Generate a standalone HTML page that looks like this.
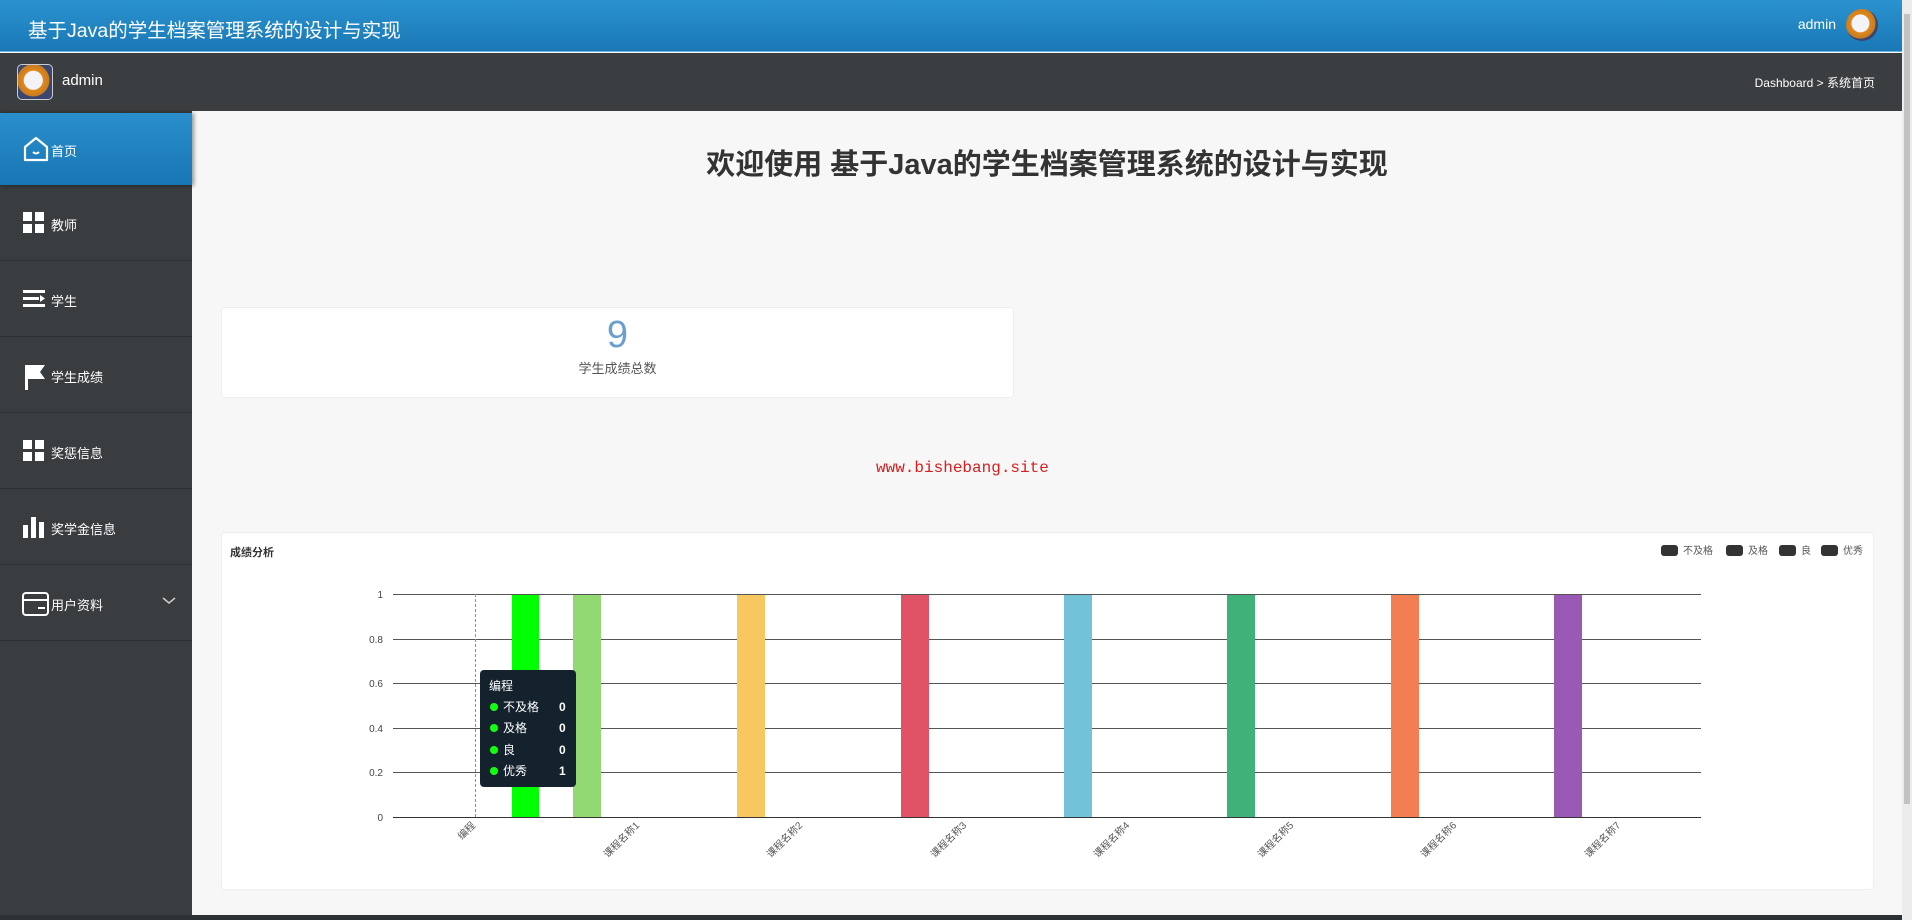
<!DOCTYPE html>
<html><head><meta charset="utf-8"><style>
*{margin:0;padding:0;box-sizing:border-box}
body{width:1912px;height:920px;overflow:hidden;background:#f7f7f7;font-family:"Liberation Sans","Noto Sans CJK SC",sans-serif;position:relative}
.top{position:absolute;left:0;top:0;width:1902px;height:52px;background:linear-gradient(#2a93cf,#1a78b6);border-bottom:1px solid #6fb8e6}
.top .t{position:absolute;left:28px;top:14px;color:#fff;font-size:19.5px}
.top .u{position:absolute;right:66px;top:16px;color:#fff;font-size:14px}
.av{position:absolute;border-radius:50%;background:radial-gradient(circle at 45% 45%,#f4f4f8 35%,#e08a1c 37%,#c77a20 60%,#3a4670 62%)}
.bar2{position:absolute;left:0;top:53px;width:1902px;height:58px;background:#3b3e40}
.bar2 .n{position:absolute;left:62px;top:19px;color:#fff;font-size:15px}
.bar2 .bc{position:absolute;right:27px;top:21px;color:#fff;font-size:12px}
.side{position:absolute;left:0;top:111px;width:192px;height:809px;background:#3a3d3f}
.it{position:absolute;left:0;width:192px;height:75px;border-bottom:1px solid #2e3133;color:#fff;font-size:13px}
.it span{position:absolute;left:51px;top:29px}
.it svg{position:absolute;left:22px;top:25px}
.home{background:linear-gradient(#2a8fcc,#1876b4);box-shadow:2px 0 4px rgba(0,0,0,.4)}
h1{position:absolute;left:192px;width:1710px;top:141px;text-align:center;font-size:29px;color:#333;font-weight:bold}
.card{position:absolute;background:#fff;border:1px solid #eee;border-radius:4px}
.scroll{position:absolute;right:0;top:0;width:10px;height:920px;background:#ececec}
.scroll i{position:absolute;left:2px;top:14px;width:6px;height:790px;background:#c2c2c2}
</style></head><body>
<div class="top"><div class="t">基于Java的学生档案管理系统的设计与实现</div><div class="u">admin</div>
<div class="av" style="left:1846px;top:9px;width:32px;height:32px"></div></div>
<div class="bar2"><div class="av" style="left:17px;top:11px;width:36px;height:36px;border-radius:5px;border:1px solid #ccc"></div><div class="n">admin</div><div class="bc">Dashboard &gt; 系统首页</div></div>
<div class="side">
<div class="it home" style="top:2px;height:73px"><svg width="28" height="28" viewBox="0 0 28 28" style="top:22px"><path d="M3 12L14 3L25 12V25H3Z" fill="none" stroke="#fff" stroke-width="2.2" stroke-linejoin="round"/><path d="M11 17Q14 20 17 17" fill="none" stroke="#fff" stroke-width="2"/></svg><span style="top:28px">首页</span></div>
<div class="it" style="top:75px"><svg width="24" height="24"><rect x="1" y="1" width="9" height="9" fill="#fff"/><rect x="13" y="1" width="9" height="9" fill="#fff"/><rect x="1" y="13" width="9" height="9" fill="#fff"/><rect x="13" y="13" width="9" height="9" fill="#fff"/></svg><span>教师</span></div>
<div class="it" style="top:151px"><svg width="24" height="24"><rect x="1" y="3" width="22" height="3" fill="#fff"/><rect x="1" y="10" width="16" height="3" fill="#fff"/><path d="M18 8L23 11.5L18 15Z" fill="#fff"/><rect x="1" y="17" width="22" height="3" fill="#fff"/></svg><span>学生</span></div>
<div class="it" style="top:227px"><svg width="24" height="28"><rect x="3" y="2" width="3" height="25" fill="#fff"/><path d="M6 2H23L18 9L23 16H6Z" fill="#fff"/></svg><span>学生成绩</span></div>
<div class="it" style="top:303px"><svg width="24" height="24"><rect x="1" y="1" width="9" height="9" fill="#fff"/><rect x="13" y="1" width="9" height="9" fill="#fff"/><rect x="1" y="13" width="9" height="9" fill="#fff"/><rect x="13" y="13" width="9" height="9" fill="#fff"/></svg><span>奖惩信息</span></div>
<div class="it" style="top:379px"><svg width="24" height="24"><rect x="1" y="10" width="5" height="13" fill="#fff"/><rect x="9" y="2" width="5" height="21" fill="#fff"/><rect x="17" y="7" width="5" height="16" fill="#fff"/></svg><span>奖学金信息</span></div>
<div class="it" style="top:455px"><svg width="28" height="26"><rect x="1" y="2" width="25" height="22" rx="3" fill="none" stroke="#fff" stroke-width="2"/><rect x="1" y="8" width="25" height="2" fill="#fff"/><rect x="16" y="16" width="7" height="2" fill="#fff"/></svg><span>用户资料</span><svg width="14" height="10" style="left:162px;top:30px"><path d="M1 2L7 7L13 2" fill="none" stroke="#ccc" stroke-width="1.5"/></svg></div>
</div>
<h1>欢迎使用 基于Java的学生档案管理系统的设计与实现</h1>
<div class="card" style="left:221px;top:307px;width:793px;height:91px;text-align:center">
<div style="font-size:38px;color:#6a9fd0;margin-top:7px;line-height:40px">9</div><div style="font-size:13px;color:#555;margin-top:3px">学生成绩总数</div></div>
<div style="position:absolute;left:876px;top:459px;color:#d62020;font-family:'Liberation Mono',monospace;font-size:16px">www.bishebang.site</div>
<div class="card" style="left:221px;top:532px;width:1653px;height:358px"></div>
<svg style="position:absolute;left:0;top:0" width="1912" height="920" font-family="Liberation Sans,Noto Sans CJK SC,sans-serif">
<text x="230" y="556" font-size="11" font-weight="bold" fill="#333">成绩分析</text>
<g font-size="10" fill="#555">
<rect x="1661" y="545" width="17" height="11" rx="3" fill="#333"/><text x="1683" y="554">不及格</text>
<rect x="1726" y="545" width="17" height="11" rx="3" fill="#333"/><text x="1748" y="554">及格</text>
<rect x="1779" y="545" width="17" height="11" rx="3" fill="#333"/><text x="1801" y="554">良</text>
<rect x="1821" y="545" width="17" height="11" rx="3" fill="#333"/><text x="1843" y="554">优秀</text></g>
<g stroke="#555" stroke-width="1">
<line x1="393" y1="594.5" x2="1701" y2="594.5"/><line x1="393" y1="639.5" x2="1701" y2="639.5"/><line x1="393" y1="683.5" x2="1701" y2="683.5"/><line x1="393" y1="728.5" x2="1701" y2="728.5"/><line x1="393" y1="772.5" x2="1701" y2="772.5"/><line x1="393" y1="817.5" x2="1701" y2="817.5" stroke="#333"/></g>
<g font-size="10" fill="#444" text-anchor="end"><text x="383" y="598">1</text><text x="383" y="643">0.8</text><text x="383" y="687">0.6</text><text x="383" y="732">0.4</text><text x="383" y="776">0.2</text><text x="383" y="821">0</text></g>
<line x1="475.5" y1="594" x2="475.5" y2="817" stroke="#5aa" stroke-dasharray="3,2"/>
<rect x="512" y="595" width="27" height="222" fill="#0f0"/>
<rect x="573" y="595" width="28" height="222" fill="#92d873"/>
<rect x="737" y="595" width="28" height="222" fill="#f6c85f"/>
<rect x="901" y="595" width="28" height="222" fill="#e05366"/>
<rect x="1064" y="595" width="28" height="222" fill="#72c3da"/>
<rect x="1227" y="595" width="28" height="222" fill="#3fb27a"/>
<rect x="1391" y="595" width="28" height="222" fill="#f37e53"/>
<rect x="1554" y="595" width="28" height="222" fill="#9b59b6"/>
<g font-size="10" fill="#555">
<text transform="translate(476,826) rotate(-45)" text-anchor="end">编程</text>
<text transform="translate(640,826) rotate(-45)" text-anchor="end">课程名称1</text>
<text transform="translate(803,826) rotate(-45)" text-anchor="end">课程名称2</text>
<text transform="translate(967,826) rotate(-45)" text-anchor="end">课程名称3</text>
<text transform="translate(1130,826) rotate(-45)" text-anchor="end">课程名称4</text>
<text transform="translate(1294,826) rotate(-45)" text-anchor="end">课程名称5</text>
<text transform="translate(1457,826) rotate(-45)" text-anchor="end">课程名称6</text>
<text transform="translate(1621,826) rotate(-45)" text-anchor="end">课程名称7</text></g>
<rect x="480" y="670" width="96" height="117" rx="4" fill="#14222e"/>
<g font-size="12" fill="#fff"><text x="489" y="690">编程</text>
<circle cx="494" cy="707" r="4" fill="#1f1"/><text x="503" y="711">不及格</text><text x="559" y="711" font-weight="bold">0</text>
<circle cx="494" cy="728" r="4" fill="#1f1"/><text x="503" y="732">及格</text><text x="559" y="732" font-weight="bold">0</text>
<circle cx="494" cy="750" r="4" fill="#1f1"/><text x="503" y="754">良</text><text x="559" y="754" font-weight="bold">0</text>
<circle cx="494" cy="771" r="4" fill="#1f1"/><text x="503" y="775">优秀</text><text x="559" y="775" font-weight="bold">1</text></g>
</svg>
<div style="position:absolute;left:0;top:915px;width:1902px;height:5px;background:#2e3133"></div>
<div class="scroll"><i></i></div>
</body></html>
